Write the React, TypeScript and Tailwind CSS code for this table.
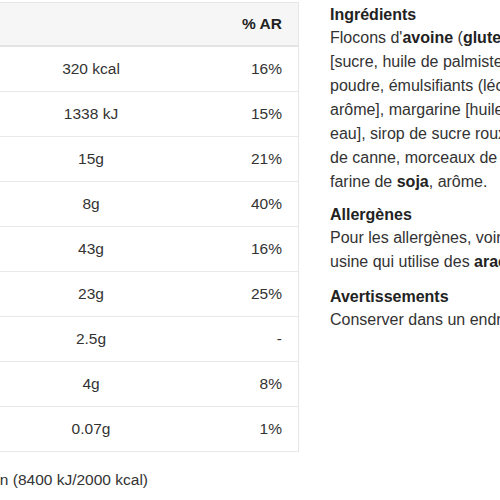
import React from 'react';

const ROWS = [
  { value: '320 kcal', ar: '16%' },
  { value: '1338 kJ', ar: '15%' },
  { value: '15g', ar: '21%' },
  { value: '8g', ar: '40%' },
  { value: '43g', ar: '16%' },
  { value: '23g', ar: '25%' },
  { value: '2.5g', ar: '-' },
  { value: '4g', ar: '8%' },
  { value: '0.07g', ar: '1%' },
];

const App: React.FC = () => {
  return (
    <div className="w-[500px] h-[500px] overflow-hidden bg-white flex text-[15.5px] text-[#333] font-['Liberation_Sans',Arial,sans-serif]">
      {/* Nutrition table */}
      <div className="w-[299px] shrink-0 pt-[2px]">
        <div className="border-t border-r border-[#e6e6e6]">
          <div className="grid grid-cols-[182px_1fr] h-[44px] items-center bg-[#f6f6f6] border-b-2 border-[#e4e4e4]">
            <div />
            <div className="text-right pr-[16px] font-bold text-[#222]">% AR</div>
          </div>
          {ROWS.map((row, idx) => (
            <div
              key={idx}
              className="grid grid-cols-[182px_1fr] h-[45px] items-center border-b border-[#e8e8e8]"
            >
              <div className="text-center">{row.value}</div>
              <div className="text-right pr-[16px]">{row.ar}</div>
            </div>
          ))}
        </div>
        <div className="w-[148px] mt-[17px] flex justify-end overflow-hidden whitespace-nowrap leading-[22px]">
          <span>*Apport de référence pour un adulte-type moyen (8400 kJ/2000 kcal)</span>
        </div>
      </div>

      {/* Product info */}
      <div className="ml-[31px] pt-[4px] whitespace-nowrap text-[16px]">
        <h3 className="font-bold text-[#222] leading-[22px]">Ingrédients</h3>
        <div className="leading-[24px]">
          <div>
            Flocons d'<b className="text-[#222]">avoine</b> (<b className="text-[#222]">gluten</b>) 44%, chocolat au lait 20%
          </div>
          <div>[sucre, huile de palmiste, beurre de cacao, lait en</div>
          <div>
            poudre, émulsifiants (lécithine de <b className="text-[#222]">soja</b>, E476),
          </div>
          <div>arôme], margarine [huile de palme, huile de colza,</div>
          <div>eau], sirop de sucre roux, sucre, sirop de sucre</div>
          <div>de canne, morceaux de caramel 3%, sel,</div>
          <div>
            farine de <b className="text-[#222]">soja</b>, arôme.
          </div>
        </div>

        <h3 className="mt-[10px] font-bold text-[#222] leading-[22px]">Allergènes</h3>
        <div className="leading-[24px]">
          <div>Pour les allergènes, voir les ingrédients en gras.</div>
          <div>
            usine qui utilise des <b className="text-[#222]">arachides</b> et des fruits à coque.
          </div>
        </div>

        <h3 className="mt-[12px] font-bold text-[#222] leading-[22px]">Avertissements</h3>
        <div className="leading-[24px]">
          <div>Conserver dans un endroit frais et sec.</div>
        </div>
      </div>
    </div>
  );
};

export default App;
